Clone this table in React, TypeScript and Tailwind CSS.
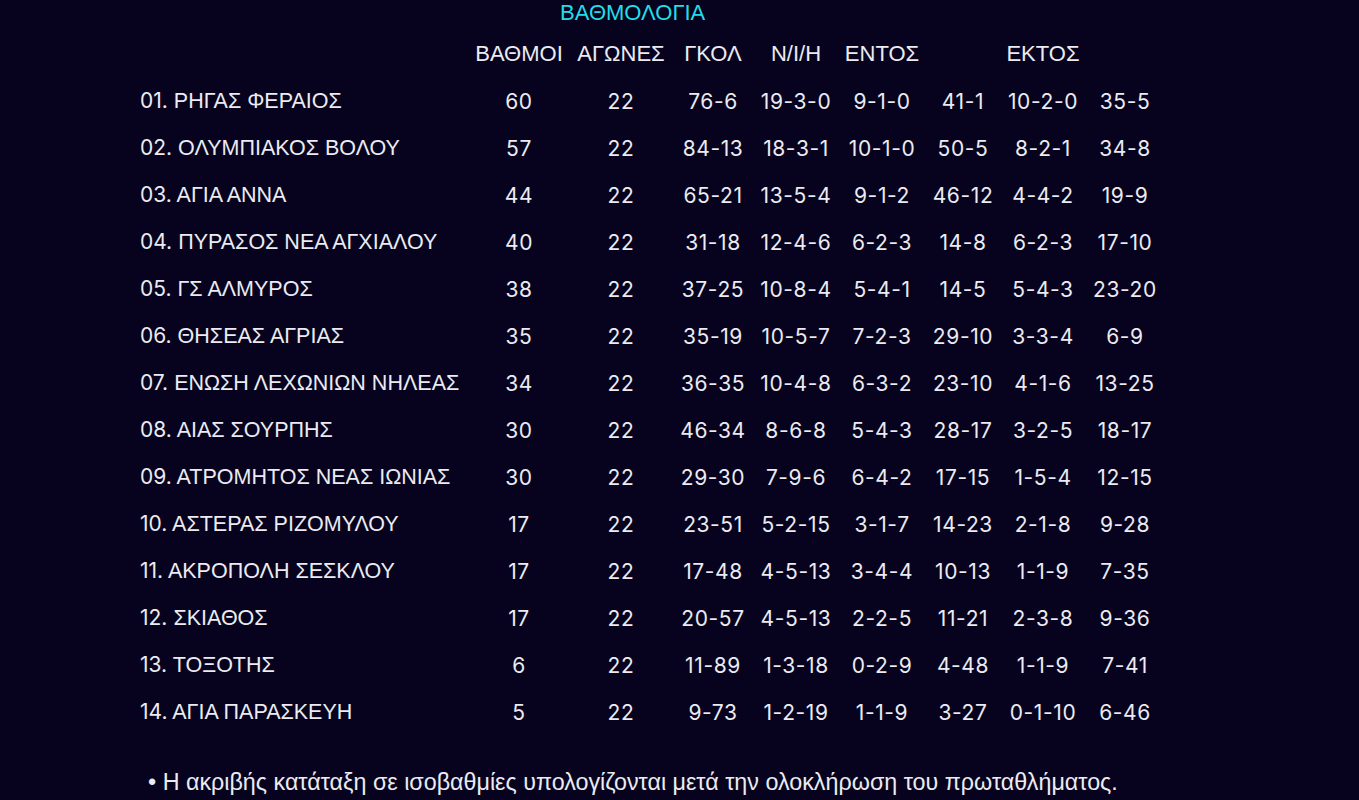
const rows: string[][] = [
  ['01.', 'ΡΗΓΑΣ ΦΕΡΑΙΟΣ', '60', '22', '76-6', '19-3-0', '9-1-0', '41-1', '10-2-0', '35-5'],
  ['02.', 'ΟΛΥΜΠΙΑΚΟΣ ΒΟΛΟΥ', '57', '22', '84-13', '18-3-1', '10-1-0', '50-5', '8-2-1', '34-8'],
  ['03.', 'ΑΓΙΑ ΑΝΝΑ', '44', '22', '65-21', '13-5-4', '9-1-2', '46-12', '4-4-2', '19-9'],
  ['04.', 'ΠΥΡΑΣΟΣ ΝΕΑ ΑΓΧΙΑΛΟΥ', '40', '22', '31-18', '12-4-6', '6-2-3', '14-8', '6-2-3', '17-10'],
  ['05.', 'ΓΣ ΑΛΜΥΡΟΣ', '38', '22', '37-25', '10-8-4', '5-4-1', '14-5', '5-4-3', '23-20'],
  ['06.', 'ΘΗΣΕΑΣ ΑΓΡΙΑΣ', '35', '22', '35-19', '10-5-7', '7-2-3', '29-10', '3-3-4', '6-9'],
  ['07.', 'ΕΝΩΣΗ ΛΕΧΩΝΙΩΝ ΝΗΛΕΑΣ', '34', '22', '36-35', '10-4-8', '6-3-2', '23-10', '4-1-6', '13-25'],
  ['08.', 'ΑΙΑΣ ΣΟΥΡΠΗΣ', '30', '22', '46-34', '8-6-8', '5-4-3', '28-17', '3-2-5', '18-17'],
  ['09.', 'ΑΤΡΟΜΗΤΟΣ ΝΕΑΣ ΙΩΝΙΑΣ', '30', '22', '29-30', '7-9-6', '6-4-2', '17-15', '1-5-4', '12-15'],
  ['10.', 'ΑΣΤΕΡΑΣ ΡΙΖΟΜΥΛΟΥ', '17', '22', '23-51', '5-2-15', '3-1-7', '14-23', '2-1-8', '9-28'],
  ['11.', 'ΑΚΡΟΠΟΛΗ ΣΕΣΚΛΟΥ', '17', '22', '17-48', '4-5-13', '3-4-4', '10-13', '1-1-9', '7-35'],
  ['12.', 'ΣΚΙΑΘΟΣ', '17', '22', '20-57', '4-5-13', '2-2-5', '11-21', '2-3-8', '9-36'],
  ['13.', 'ΤΟΞΟΤΗΣ', '6', '22', '11-89', '1-3-18', '0-2-9', '4-48', '1-1-9', '7-41'],
  ['14.', 'ΑΓΙΑ ΠΑΡΑΣΚΕΥΗ', '5', '22', '9-73', '1-2-19', '1-1-9', '3-27', '0-1-10', '6-46'],
]

const heads = ['ΒΑΘΜΟΙ', 'ΑΓΩΝΕΣ', 'ΓΚΟΛ', 'Ν/Ι/Η', 'ΕΝΤΟΣ', '', 'ΕΚΤΟΣ', '']

const grid = 'grid grid-cols-[332px_94px_110px_74px_92px_80px_82px_78px_86px] items-center h-[47px]'

export default function App() {
  return (
    <main className="min-h-screen bg-[#07031f] text-[#ebebf1] font-['Liberation_Sans',Arial,sans-serif] text-[21.5px]">
      <div className="pl-[140px]">
        {/* title */}
        <div className="h-[30px] leading-[26px] pl-[420px] text-[22px] text-[#22dde6]">ΒΑΘΜΟΛΟΓΙΑ</div>

        {/* header */}
        <div className={grid}>
          <div />
          {heads.map((h, i) => (
            <div key={i} className="text-center text-[22px]">{h}</div>
          ))}
        </div>

        {rows.map((r) => (
          <div key={r[0]} className={`${grid} pt-[2px]`}>
            <div className="whitespace-nowrap">
              <span className="font-['Inter',sans-serif] text-[21px]">{r[0]}</span> {r[1]}
            </div>
            {r.slice(2).map((v, i) => (
              <div key={i} className="text-center font-['Inter',sans-serif] text-[21px] tracking-[0.6px]">{v}</div>
            ))}
          </div>
        ))}
      </div>

      {/* note */}
      <div className="pt-[34px] pl-[148px] text-[23.3px] leading-[26px]">
        • Η ακριβής κατάταξη σε ισοβαθμίες υπολογίζονται μετά την ολοκλήρωση του πρωταθλήματος.
      </div>
    </main>
  )
}
